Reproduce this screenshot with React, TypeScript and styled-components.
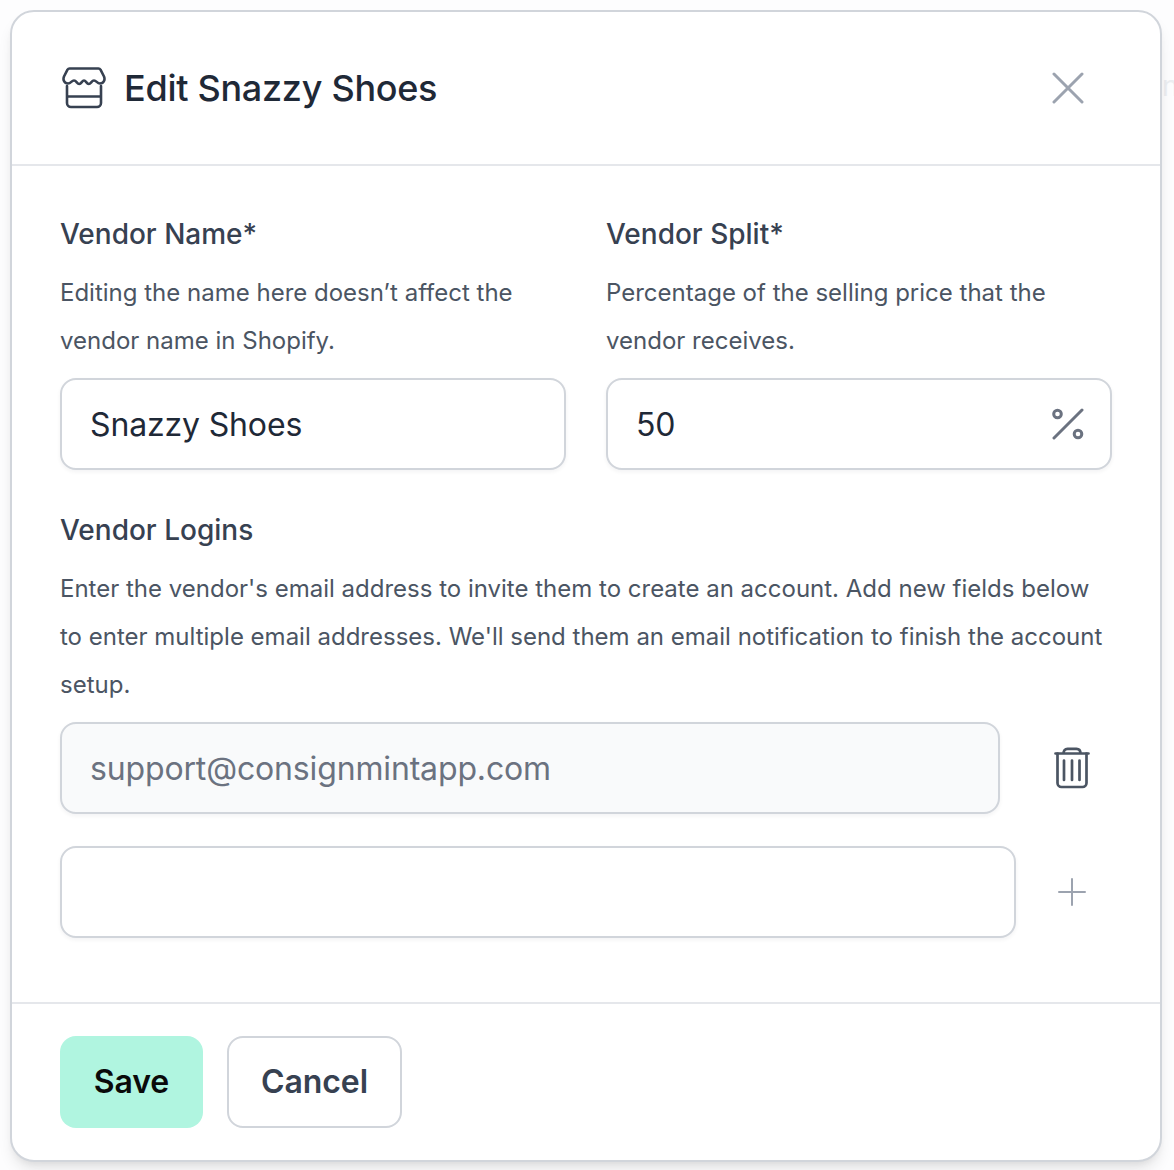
import React from 'react';
import styled, { createGlobalStyle } from 'styled-components';

const Global = createGlobalStyle`
  html, body { margin: 0; padding: 0; background: #fdfdfe; }
  * { box-sizing: border-box; }
  body { font-family: Inter, "Liberation Sans", sans-serif; }
`;
const Page = styled.div`
  position: relative; width: 1174px; height: 1170px; padding: 10px 12px 8px 10px; overflow: hidden;
`;
const BackdropGlyph = styled.span`
  position: absolute; left: 1162px; top: 68px; font-size: 28px; line-height: 36px; color: #eceef1;
`;
const Modal = styled.div`
  position: relative; width: 1152px; height: 1152px; background: #fff; border: 2px solid #d1d5db; border-radius: 24px;
  box-shadow: 0 10px 15px -3px rgba(0,0,0,.1), 0 4px 6px -2px rgba(0,0,0,.05);
  display: flex; flex-direction: column;
`;
const Header = styled.header`
  height: 154px; flex: none; border-bottom: 2px solid #e5e7eb;
  display: flex; align-items: center; padding: 0 76px 0 50px;
`;
const Title = styled.h1`
  margin: 0 0 2px 18px; font-size: 36px; line-height: 44px; font-weight: 500; color: #1f2937; flex: 1;
  letter-spacing: -0.28px; position: relative; top: 1px;
`;
const Body = styled.div`
  flex: 1; padding: 48px 48px 0; display: flex; flex-direction: column;
`;
const Columns = styled.div`
  display: grid; grid-template-columns: 506px 506px; column-gap: 40px;
`;
const Label = styled.div`
  font-size: 28px; line-height: 40px; font-weight: 500; color: #374151; margin-bottom: 15px;
`;
const Help = styled.p`
  margin: 0 0 13px; font-size: 24px; line-height: 48px; color: #4b5563;
`;
const InputBox = styled.div<{ $w?: number; $muted?: boolean }>`
  width: ${p => (p.$w ? `${p.$w}px` : '100%')}; height: 92px; flex: none;
  border: 2px solid #d1d5db; border-radius: 16px; background: ${p => (p.$muted ? '#f9fafb' : '#fff')};
  box-shadow: 0 2px 4px rgba(17,24,39,.05);
  display: flex; align-items: center; justify-content: space-between; padding: 0 26px 0 28px;
  font-size: 32px; letter-spacing: -0.15px; color: ${p => (p.$muted ? '#6b7280' : '#1f2937')};
`;
const Section = styled.div`
  margin-top: 40px;
`;
const Row = styled.div<{ $mb?: number }>`
  display: flex; align-items: center; margin-bottom: ${p => p.$mb ?? 0}px;
`;
const IconSlot = styled.div<{ $ml: number }>`
  margin-left: ${p => p.$ml}px; display: flex;
`;
const Footer = styled.footer`
  height: 158px; flex: none; border-top: 2px solid #e5e7eb;
  padding: 32px 48px 0; display: flex; gap: 24px; align-items: flex-start;
`;
const Btn = styled.button<{ $primary?: boolean }>`
  height: 92px; font: 600 32px Inter, sans-serif; letter-spacing: -0.1px; border-radius: 16px;
  width: ${p => (p.$primary ? 143 : 175)}px; padding: 0 0 2px;
  background: ${p => (p.$primary ? '#b0f5e0' : '#fff')};
  color: ${p => (p.$primary ? '#0a0a0a' : '#374151')};
  border: ${p => (p.$primary ? 'none' : '2px solid #d1d5db')};
`;

const StoreIcon = () => (
  <svg width="44" height="44" viewBox="0 0 44 44" fill="none" stroke="#374151" strokeWidth="2.6" strokeLinecap="round" strokeLinejoin="round">
    <path d="M7.500 2.500H36.500Q37.800 2.500 38.500 3.600L42 10.500Q43 13 42 15Q40.800 17.500 38 17.500C35 17.500 34.500 14.500 32 14.500C29.500 14.500 29 18 26.800 18C24.500 18 24 14.500 22 14.500C20 14.500 19.500 18 17.200 18C15 18 14.500 14.500 12 14.500C9.500 14.500 9 17.500 6 17.500Q3.200 17.500 2 15Q1 13 2 10.500L5.500 3.600Q6.200 2.500 7.500 2.500Z" />
    <path d="M5 20V37a4 4 0 0 0 4 4H35a4 4 0 0 0 4-4V20M5 30.500H39" />
  </svg>
);
const CloseIcon = () => (
  <svg width="32" height="32" viewBox="0 0 32 32" stroke="#9ca3af" strokeWidth="3" strokeLinecap="round">
    <path d="M2 2l28 28M30 2L2 30" />
  </svg>
);
const PercentIcon = () => (
  <svg width="32" height="32" viewBox="0 0 32 32" fill="none" stroke="#6b7280" strokeWidth="3" strokeLinecap="round">
    <path d="M30 2L2 30" />
    <circle cx="5.500" cy="6" r="3.800" />
    <circle cx="26" cy="26" r="3.800" />
  </svg>
);
const TrashIcon = () => (
  <svg width="36" height="42" viewBox="0 0 36 42" fill="none" stroke="#4b5563" strokeWidth="2.700" strokeLinecap="round" strokeLinejoin="round">
    <path d="M1.500 6.500H34.500M9.500 6.500C9.500 3.500 11 1.800 13.500 1.800H22.500C25 1.800 26.500 3.500 26.500 6.500" />
    <path d="M3.500 6.500V36a4 4 0 0 0 4 4H28.500a4 4 0 0 0 4-4V6.500M10 13.500V33M18 13.500V33M25.500 13.500V33" />
  </svg>
);
const PlusIcon = () => (
  <svg width="28" height="28" viewBox="0 0 28 28" stroke="#9ca3af" strokeWidth="2" strokeLinecap="round">
    <path d="M14 1v26M1 14h26" />
  </svg>
);

export default function App() {
  return (
    <Page>
      <Global />
      <BackdropGlyph>n</BackdropGlyph>
      <Modal>
        <Header>
          <StoreIcon />
          <Title>Edit Snazzy Shoes</Title>
          <CloseIcon />
        </Header>
        <Body>
          <Columns>
            <div>
              <Label>Vendor Name*</Label>
              <Help>Editing the name here doesn’t affect the vendor name in Shopify.</Help>
              <InputBox>Snazzy Shoes</InputBox>
            </div>
            <div>
              <Label>Vendor Split*</Label>
              <Help>Percentage of the selling price that the vendor receives.</Help>
              <InputBox>50<PercentIcon /></InputBox>
            </div>
          </Columns>
          <Section>
            <Label>Vendor Logins</Label>
            <Help>Enter the vendor's email address to invite them to create an account. Add new fields below to enter multiple email addresses. We'll send them an email notification to finish the account setup.</Help>
            <Row $mb={32}>
              <InputBox $w={940} $muted>support@consignmintapp.com</InputBox>
              <IconSlot $ml={54}><TrashIcon /></IconSlot>
            </Row>
            <Row>
              <InputBox $w={956} />
              <IconSlot $ml={42}><PlusIcon /></IconSlot>
            </Row>
          </Section>
        </Body>
        <Footer>
          <Btn $primary>Save</Btn>
          <Btn>Cancel</Btn>
        </Footer>
      </Modal>
    </Page>
  );
}
